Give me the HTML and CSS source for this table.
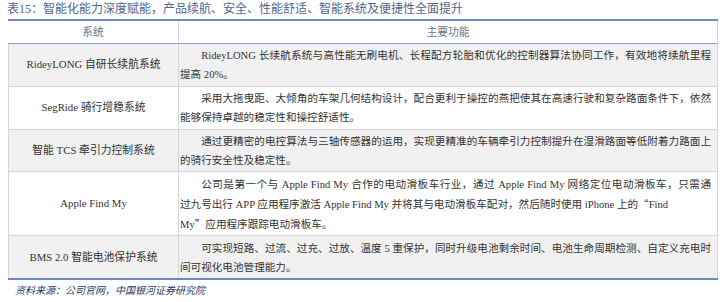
FILE: index.html
```html
<!DOCTYPE html>
<html lang="zh-CN">
<head>
<meta charset="utf-8">
<link rel="stylesheet" href="styles.css">
</head>
<body>
<div class="page">
  <div class="title">表15：智能化能力深度赋能，产品续航、安全、性能舒适、智能系统及便捷性全面提升</div>
  <div class="tbl">
    <div class="h c1">系统</div>
    <div class="h c2">主要功能</div>

    <div class="cell c1 odd first">RideyLONG 自研长续航系统</div>
    <div class="cell c2 odd first">
      <span class="ln ind">RideyLONG 长续航系统与高性能无刷电机、长程配方轮胎和优化的控制器算法协同工作，有效地将续航里程</span>
      <span class="ln last">提高 20%。</span>
    </div>

    <div class="cell c1">SegRide 骑行增稳系统</div>
    <div class="cell c2">
      <span class="ln ind">采用大拖曳距、大倾角的车架几何结构设计，配合更利于操控的燕把使其在高速行驶和复杂路面条件下，依然</span>
      <span class="ln last">能够保持卓越的稳定性和操控舒适性。</span>
    </div>

    <div class="cell c1 odd">智能 TCS 牵引力控制系统</div>
    <div class="cell c2 odd">
      <span class="ln ind">通过更精密的电控算法与三轴传感器的运用，实现更精准的车辆牵引力控制提升在湿滑路面等低附着力路面上</span>
      <span class="ln last">的骑行安全性及稳定性。</span>
    </div>

    <div class="cell c1">Apple Find My</div>
    <div class="cell c2">
      <span class="ln ind">公司是第一个与 Apple Find My 合作的电动滑板车行业，通过 Apple Find My 网络定位电动滑板车，只需通</span>
      <span class="ln last">过九号出行 APP 应用程序激活 Apple Find My 并将其与电动滑板车配对，然后随时使用 iPhone 上的<span class="q">“</span>Find</span>
      <span class="ln last">My<span class="q">”</span>应用程序跟踪电动滑板车。</span>
    </div>

    <div class="cell c1 odd">BMS 2.0 智能电池保护系统</div>
    <div class="cell c2 odd">
      <span class="ln ind">可实现短路、过流、过充、过放、温度 5 重保护，同时升级电池剩余时间、电池生命周期检测、自定义充电时</span>
      <span class="ln last">间可视化电池管理能力。</span>
    </div>
  </div>
  <div class="source">资料来源：公司官网，中国银河证券研究院</div>
</div>
</body>
</html>
```

FILE: styles.css
```css
html, body {
  margin: 0;
  padding: 0;
  background: #ffffff;
}

.page {
  width: 728px;
  height: 302px;
  font-family: "Liberation Serif", "Noto Sans CJK SC", serif;
  color: #333333;
}

.title {
  padding-left: 7px;
  height: 19px;
  line-height: 19px;
  font-size: 12px;
  color: #52658a;
  white-space: nowrap;
}

.tbl {
  margin-left: 8px;
  width: 710px;
  display: grid;
  grid-template-columns: 171px 539px;
  border-top: 2px solid #7088c0;
  border-bottom: 2px solid #7088c0;
  font-size: 10.6px;
}

.h {
  height: 22px;
  line-height: 22px;
  text-align: center;
  color: #6a7690;
  font-size: 10.8px;
  border-bottom: 1px solid #8b9fd0;
}

.h.c1 {
  border-right: 1px solid #d6d6d6;
}

.h.c2 {
  border-right: 1px solid #d6d6d6;
}

.cell {
  border-top: 1px solid #d6d6d6;
  border-right: 1px solid #d6d6d6;
  line-height: 19px;
  min-width: 0;
}

.cell.first {
  border-top: none;
}

.cell.c1 {
  border-left: 1px solid #d6d6d6;
  display: flex;
  align-items: center;
  justify-content: center;
  white-space: nowrap;
  font-size: 10.8px;
}

.cell.c2 {
  padding: 2.4px 6px 1.4px 1px;
}

.cell.odd {
  background: #f1f1f1;
}

.ln {
  display: block;
  white-space: nowrap;
  text-align: justify;
  text-align-last: justify;
}

.ln.ind {
  text-indent: 2em;
}

.ln.last {
  text-align-last: auto;
}

.q {
  font-family: "Noto Sans CJK SC", sans-serif;
}

.source {
  padding-left: 15px;
  margin-top: 4px;
  line-height: 14px;
  font-size: 10px;
  font-style: italic;
  color: #1f3a6e;
}
```
